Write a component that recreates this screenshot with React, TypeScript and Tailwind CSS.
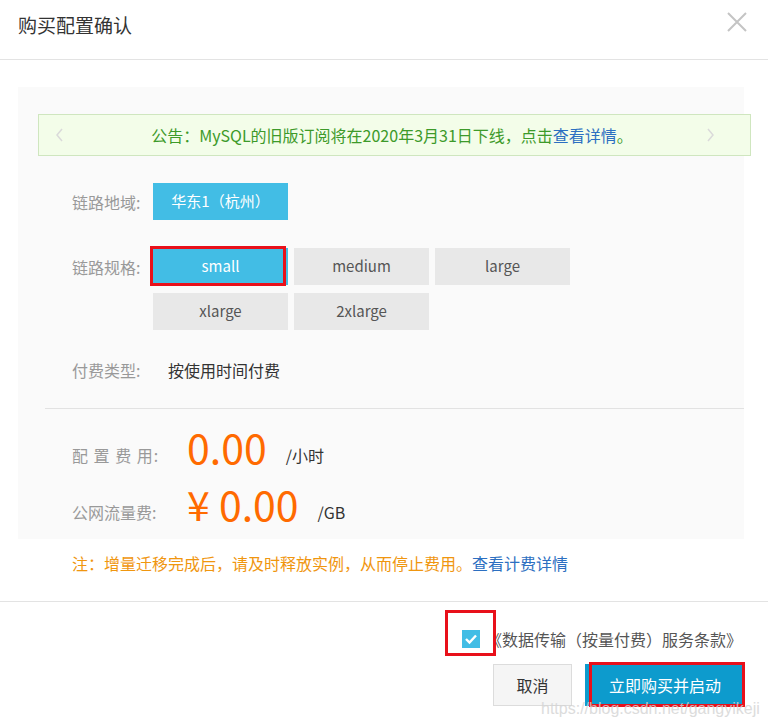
import React from "react";

const font = { fontFamily: '"Microsoft YaHei", "Noto Sans CJK SC", "Noto Sans", sans-serif' };

function SpecButton({ label, active = false, marked = false }: { label: string; active?: boolean; marked?: boolean }) {
  return (
    <div className="relative w-[135px] h-[37px]">
      <div
        className={
          "w-full h-full flex items-center justify-center text-[15px] " +
          (active ? "bg-[#42bde5] text-white" : "bg-[#e8e8e8] text-[#555]")
        }
      >
        {label}
      </div>
      {marked && (
        <div className="absolute left-[-3px] top-[-2px] w-[136px] h-[40px] border-[3px] border-[#e8101a]" />
      )}
    </div>
  );
}

export default function App() {
  return (
    <div className="relative w-[768px] h-[727px] bg-white overflow-hidden" style={font}>
      {/* header */}
      <div className="h-[60px] border-b border-[#e3e3e3] flex items-center justify-between pl-[18px] pr-[20px]">
        <div className="text-[19px] text-[#333] pb-[8px]">购买配置确认</div>
        <svg width="22" height="22" viewBox="0 0 22 22" className="mb-[16px]">
          <path d="M2 2 L20 20 M20 2 L2 20" stroke="#c4c4c4" strokeWidth="2" fill="none" />
        </svg>
      </div>

      {/* gray panel */}
      <div className="mt-[27px] ml-[18px] w-[726px] bg-[#fafafa] pt-[27px] pb-[12px]">
        <div className="ml-[20px] w-[713px] h-[42px] bg-[#f3fde9] border border-[#cfe6bf] flex items-center justify-between px-[15px]">
          <svg width="10" height="16" viewBox="0 0 10 16">
            <path d="M8 2 L3 8 L8 14" stroke="#dadada" strokeWidth="1.5" fill="none" />
          </svg>
          <div className="text-[16px] leading-[22px] text-[#3d9a2a] ml-[14px]">
            公告：MySQL的旧版订阅将在2020年3月31日下线，点击<span className="text-[#2c6fc1]">查看详情</span>。
          </div>
          <svg width="10" height="16" viewBox="0 0 10 16" className="mr-[19px]">
            <path d="M2 2 L7 8 L2 14" stroke="#dadada" strokeWidth="1.5" fill="none" />
          </svg>
        </div>

        {/* region */}
        <div className="flex items-center mt-[27px] pl-[54px]">
          <div className="w-[81px] text-[16px] text-[#999]">链路地域:</div>
          <div className="w-[135px] h-[37px] bg-[#42bde5] text-white text-[15px] flex items-center justify-center">
            华东1（杭州）
          </div>
        </div>

        {/* spec */}
        <div className="flex items-start mt-[28px] pl-[54px]">
          <div className="w-[81px] h-[37px] flex items-center text-[16px] text-[#999]">链路规格:</div>
          <div className="flex flex-col gap-[8px]">
            <div className="flex gap-[6px]">
              <SpecButton label="small" active marked />
              <SpecButton label="medium" />
              <SpecButton label="large" />
            </div>
            <div className="flex gap-[6px]">
              <SpecButton label="xlarge" />
              <SpecButton label="2xlarge" />
            </div>
          </div>
        </div>

        {/* pay type */}
        <div className="flex items-center mt-[29px] pl-[54px] h-[22px]">
          <div className="w-[96px] text-[16px] text-[#999]">付费类型:</div>
          <div className="text-[16px] text-[#333]">按使用时间付费</div>
        </div>

        <div className="ml-[27px] mt-[27px] h-px bg-[#e2e2e2]" />

        {/* config fee */}
        <div className="flex items-end pl-[54px] mt-[13px] h-[48px]">
          <div className="w-[115px] text-[16px] text-[#999] tracking-[1px] pb-[3px]">配 置 费 用:</div>
          <div className="text-[41px] leading-[48px] text-[#ff6a00]">0.00</div>
          <div className="ml-[19px] text-[16px] text-[#333] pb-[3px]">/小时</div>
        </div>

        {/* traffic fee */}
        <div className="flex items-end pl-[54px] mt-[9px] h-[48px]">
          <div className="w-[115px] text-[16px] text-[#999] pb-[3px]">公网流量费:</div>
          <div className="text-[41px] leading-[48px] text-[#ff6a00]">¥ 0.00</div>
          <div className="ml-[19px] text-[16px] text-[#333] pb-[3px]">/GB</div>
        </div>
      </div>

      {/* note */}
      <div className="mt-[13px] ml-[72px] text-[16px] leading-[22px] text-[#f0960f]">
        注：增量迁移完成后，请及时释放实例，从而停止费用。<span className="text-[#2c6fc1]">查看计费详情</span>
      </div>

      {/* footer */}
      <div className="mt-[27px] border-t border-[#e3e3e3] pt-[15px] pr-[26px] flex flex-col items-end">
        <div className="flex items-center h-[44px]">
          <div className="relative w-[18px] h-[18px] bg-[#42bde5] flex items-center justify-center">
            <svg width="14" height="12" viewBox="0 0 14 12">
              <path d="M2 6 L5.5 9.5 L12 2.5" stroke="#fff" strokeWidth="2.4" fill="none" />
            </svg>
            <div className="absolute left-[-17px] top-[-20px] w-[51px] h-[46px] border-[3px] border-[#e8101a]" />
          </div>
          <div className="text-[16px] text-[#555] ml-[6px]">《数据传输（按量付费）服务条款》</div>
        </div>
        <div className="flex items-center gap-[13px] mt-[3px] mr-[-3px]">
          <div className="w-[79px] h-[42px] border border-[#dcdcdc] bg-[#f5f5f5] text-[16px] text-[#333] flex items-center justify-center">
            取消
          </div>
          <div className="relative w-[160px] h-[42px] bg-[#0d9bcd] text-white text-[16px] flex items-center justify-center">
            立即购买并启动
            <div className="absolute left-[4px] top-[-2px] w-[156px] h-[45px] border-[3px] border-[#e8101a]" />
          </div>
        </div>
      </div>

      <div
        className="absolute left-[541px] top-[699px] text-[16px] leading-[20px] text-[#d4d4d4] opacity-80"
        style={{ fontFamily: '"Liberation Sans", Arial, sans-serif' }}
      >
        https://blog.csdn.net/gangyikeji
      </div>
    </div>
  );
}
